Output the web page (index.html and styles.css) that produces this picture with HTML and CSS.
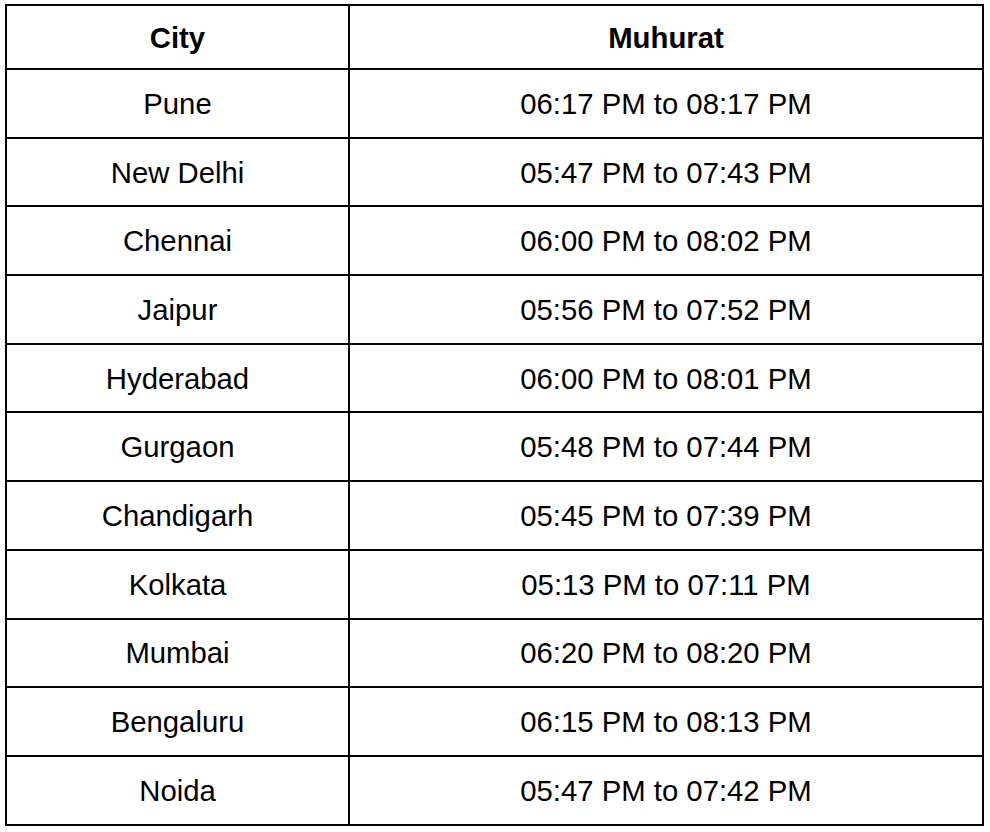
FILE: index.html
```html
<!DOCTYPE html>
<html>
<head>
<meta charset="utf-8">
<link rel="stylesheet" href="styles.css">
</head>
<body>
<table class="muhurat">
  <colgroup><col class="col-city"><col class="col-time"></colgroup>
  <thead>
    <tr class="head"><th>City</th><th>Muhurat</th></tr>
  </thead>
  <tbody>
    <tr><td>Pune</td><td>06:17 PM to 08:17 PM</td></tr>
    <tr><td>New Delhi</td><td>05:47 PM to 07:43 PM</td></tr>
    <tr><td>Chennai</td><td>06:00 PM to 08:02 PM</td></tr>
    <tr><td>Jaipur</td><td>05:56 PM to 07:52 PM</td></tr>
    <tr><td>Hyderabad</td><td>06:00 PM to 08:01 PM</td></tr>
    <tr><td>Gurgaon</td><td>05:48 PM to 07:44 PM</td></tr>
    <tr><td>Chandigarh</td><td>05:45 PM to 07:39 PM</td></tr>
    <tr><td>Kolkata</td><td>05:13 PM to 07:11 PM</td></tr>
    <tr><td>Mumbai</td><td>06:20 PM to 08:20 PM</td></tr>
    <tr><td>Bengaluru</td><td>06:15 PM to 08:13 PM</td></tr>
    <tr><td>Noida</td><td>05:47 PM to 07:42 PM</td></tr>
  </tbody>
</table>
</body>
</html>
```
FILE: styles.css
```css
html, body {
  margin: 0;
  padding: 0;
  background: #ffffff;
}
body {
  padding: 4px 0 0 5px;
  font-family: "Liberation Sans", Arial, sans-serif;
  color: #000;
}
.muhurat {
  border-collapse: collapse;
  width: 979px;
  table-layout: fixed;
  border: 2px solid #000;
}
.col-city { width: 343px; }
.muhurat th,
.muhurat td {
  border: 2px solid #000;
  text-align: center;
  vertical-align: middle;
  padding: 0;
  font-size: 29.3px;
  line-height: 33px;
}
.muhurat th {
  font-weight: bold;
  height: 62px;
}
.muhurat td {
  height: 66.7px;
}
```
